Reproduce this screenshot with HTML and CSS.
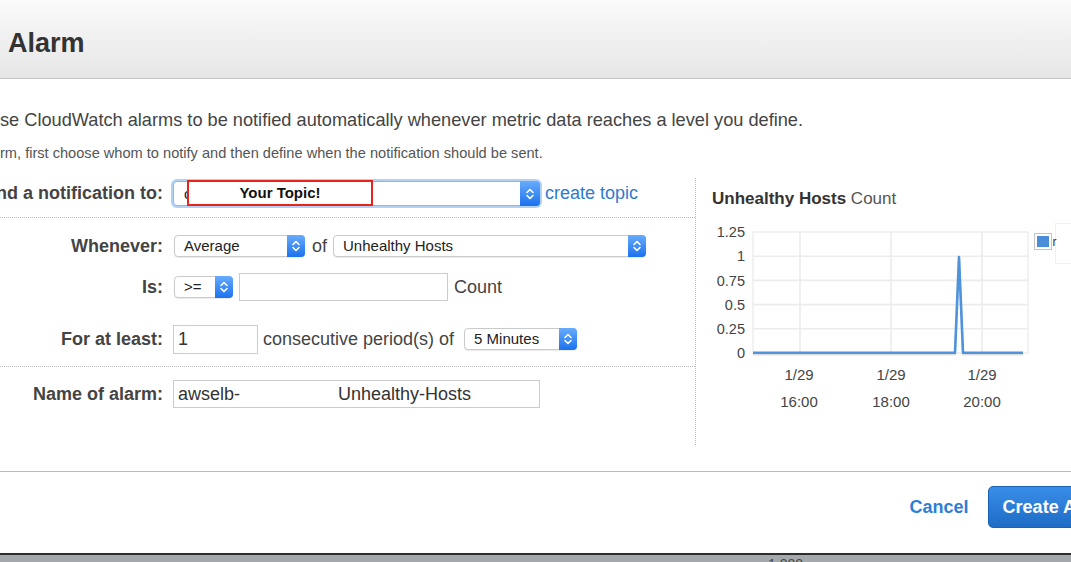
FILE: index.html
```html
<!DOCTYPE html>
<html>
<head>
<meta charset="utf-8">
<link rel="stylesheet" href="styles.css">
</head>
<body>
<div class="page">
  <header class="hdr"><h1>Alarm</h1></header>
  <p class="intro">se CloudWatch alarms to be notified automatically whenever metric data reaches a level you define.</p>
  <p class="sub">rm, first choose whom to notify and then define when the notification should be sent.</p>

  <div class="form">
    <div class="left">
      <div class="row r1">
        <div class="lbl"><span>nd a notification to:</span></div>
        <div class="sel sel-topic">
          <span class="txt">c</span>
          <span class="arr"><svg width="12" height="16" viewBox="0 0 12 16"><path d="M3 6.5 L6 3.5 L9 6.5 M3 9.5 L6 12.5 L9 9.5" fill="none" stroke="#fff" stroke-width="1.6" stroke-linecap="round" stroke-linejoin="round"/></svg></span>
          <div class="redbox">Your Topic!</div>
        </div>
        <a class="link">create topic</a>
      </div>

      <div class="group">
        <div class="row r2">
          <div class="lbl"><span>Whenever:</span></div>
          <div class="sel sel-avg">
            <span class="txt">Average</span>
            <span class="arr"><svg width="12" height="16" viewBox="0 0 12 16"><path d="M3 6.5 L6 3.5 L9 6.5 M3 9.5 L6 12.5 L9 9.5" fill="none" stroke="#fff" stroke-width="1.6" stroke-linecap="round" stroke-linejoin="round"/></svg></span>
          </div>
          <span class="word of">of</span>
          <div class="sel sel-metric">
            <span class="txt">Unhealthy Hosts</span>
            <span class="arr"><svg width="12" height="16" viewBox="0 0 12 16"><path d="M3 6.5 L6 3.5 L9 6.5 M3 9.5 L6 12.5 L9 9.5" fill="none" stroke="#fff" stroke-width="1.6" stroke-linecap="round" stroke-linejoin="round"/></svg></span>
          </div>
        </div>

        <div class="row r3">
          <div class="lbl"><span>Is:</span></div>
          <div class="sel sel-op">
            <span class="txt">&gt;=</span>
            <span class="arr"><svg width="12" height="16" viewBox="0 0 12 16"><path d="M3 6.5 L6 3.5 L9 6.5 M3 9.5 L6 12.5 L9 9.5" fill="none" stroke="#fff" stroke-width="1.6" stroke-linecap="round" stroke-linejoin="round"/></svg></span>
          </div>
          <div class="inp inp-thr"></div>
          <span class="word unit">Count</span>
        </div>

        <div class="row r4">
          <div class="lbl"><span>For at least:</span></div>
          <div class="inp inp-n">1</div>
          <span class="word cons">consecutive period(s) of</span>
          <div class="sel sel-period">
            <span class="txt">5 Minutes</span>
            <span class="arr"><svg width="12" height="16" viewBox="0 0 12 16"><path d="M3 6.5 L6 3.5 L9 6.5 M3 9.5 L6 12.5 L9 9.5" fill="none" stroke="#fff" stroke-width="1.6" stroke-linecap="round" stroke-linejoin="round"/></svg></span>
          </div>
        </div>
      </div>

      <div class="row r5">
        <div class="lbl"><span>Name of alarm:</span></div>
        <div class="inp inp-name"><span>awselb-</span><span class="gap"></span><span>Unhealthy-Hosts</span></div>
      </div>
    </div>

    <div class="chart">
      <div class="ctitle"><b>Unhealthy Hosts</b> Count</div>
      <svg class="plot" width="359" height="200" viewBox="0 0 359 200">
        <rect x="41" y="17" width="275" height="121" fill="#fff" stroke="#e6e6e6" stroke-width="1"/>
        <g stroke="#ececec" stroke-width="1.6">
          <line x1="41" y1="41.2" x2="316" y2="41.2"/>
          <line x1="41" y1="65.4" x2="316" y2="65.4"/>
          <line x1="41" y1="89.6" x2="316" y2="89.6"/>
          <line x1="41" y1="113.8" x2="316" y2="113.8"/>
          <line x1="88" y1="17" x2="88" y2="138"/>
          <line x1="179" y1="17" x2="179" y2="138"/>
          <line x1="270" y1="17" x2="270" y2="138"/>
        </g>
        <g class="ylab" text-anchor="end">
          <text x="33" y="22">1.25</text>
          <text x="33" y="46">1</text>
          <text x="33" y="70.5">0.75</text>
          <text x="33" y="94.5">0.5</text>
          <text x="33" y="119">0.25</text>
          <text x="33" y="143">0</text>
        </g>
        <g class="xlab" text-anchor="middle">
          <text x="87" y="165">1/29</text>
          <text x="179" y="165">1/29</text>
          <text x="270" y="165">1/29</text>
          <text x="87" y="192">16:00</text>
          <text x="179" y="192">18:00</text>
          <text x="270" y="192">20:00</text>
        </g>
        <polyline points="41,139.5 243,139.5 247,44 251,139.5 311,139.5" fill="none" stroke="rgba(0,0,0,0.13)" stroke-width="2"/>
        <polyline points="41,137.8 243,137.8 247,42 251,137.8 311,137.8" fill="none" stroke="#4f93dc" stroke-width="2.6" stroke-linejoin="round"/>
        <rect x="343.5" y="8.5" width="40" height="40" fill="none" stroke="#f0f0f0"/>
        <rect x="322.5" y="18.5" width="17" height="16" fill="#fff" stroke="#c4c4c4"/>
        <rect x="325" y="21" width="12" height="11" fill="#4a8ed9"/>
        <text x="340.5" y="31" class="legt">r</text>
      </svg>
    </div>
  </div>

  <div class="foot">
    <a class="cancel">Cancel</a>
    <button class="create">Create Alarm</button>
  </div>
  <div class="strip"><span class="s2">1,000</span></div>
</div>
</body>
</html>
```

FILE: styles.css
```css
html, body {
  margin: 0;
  padding: 0;
  overflow: hidden;
  background: #fff;
  font-family: "Liberation Sans", Arial, sans-serif;
}

.page {
  width: 1071px;
  height: 562px;
  display: flex;
  flex-direction: column;
  overflow: hidden;
}

.hdr {
  height: 79px;
  flex: none;
  box-sizing: border-box;
  border-bottom: 1px solid #c6c6c6;
  background: linear-gradient(#fafafa, #e6e6e6);
  padding: 27px 0 0 8px;
}

.hdr h1 {
  margin: 0;
  font-size: 27px;
  line-height: 32px;
  font-weight: bold;
  color: #333;
}

.intro {
  margin: 30px 0 0;
  font-size: 18.2px;
  line-height: 22px;
  color: #444;
  white-space: nowrap;
}

.sub {
  margin: 13px 0 0;
  font-size: 14.6px;
  line-height: 18px;
  color: #555;
  white-space: nowrap;
}

.form {
  margin-top: 16px;
  height: 267px;
  flex: none;
  display: flex;
}

.left {
  width: 696px;
  flex: none;
  box-sizing: border-box;
  border-right: 1px dotted #bcbcbc;
}

.row {
  display: flex;
  align-items: center;
  white-space: nowrap;
}

.lbl {
  width: 163px;
  flex: none;
  display: flex;
  justify-content: flex-end;
  margin-right: 10px;
  font-weight: bold;
  font-size: 18px;
  color: #444;
}

.r1 {
  height: 40px;
  box-sizing: border-box;
  padding-bottom: 8px;
  border-bottom: 1px dotted #bcbcbc;
}

.group {
  padding: 14px 0 13px;
  border-bottom: 1px dotted #bcbcbc;
}

.r2, .r3, .r4, .r5 { height: 28px; }
.r3 { margin-top: 13px; }
.r4 { margin-top: 24px; }
.r5 { margin-top: 13px; }

.word {
  font-size: 18px;
  color: #444;
}

.sel {
  position: relative;
  display: flex;
  align-items: stretch;
  height: 22px;
  box-sizing: border-box;
  border: 1px solid #cacaca;
  border-radius: 4px;
  background: #fff;
  box-shadow: 0 1px 1px rgba(0, 0, 0, 0.08);
  font-size: 15px;
  color: #222;
  flex: none;
}

.sel .txt {
  flex: 1;
  padding-left: 9px;
  line-height: 20px;
  overflow: hidden;
}

.sel .arr {
  width: 18px;
  margin: -1px -1px -1px 0;
  border-radius: 0 4px 4px 0;
  background: linear-gradient(#67abfb, #1c72ee);
  display: flex;
  align-items: center;
  justify-content: center;
}

.sel-topic {
  width: 367px;
  height: 25px;
  border-color: #8db8ee;
  box-shadow: 0 0 0 2px #b3d1f5;
}
.sel-topic .txt { line-height: 23px; padding-left: 10px; }
.sel-topic .arr { width: 20px; }

.redbox {
  position: absolute;
  left: 13px;
  top: -2px;
  width: 186px;
  height: 26px;
  box-sizing: border-box;
  border: 2px solid #e8231a;
  background: #fff;
  font-weight: bold;
  font-size: 15px;
  line-height: 22px;
  color: #111;
  text-align: center;
}

.link {
  margin-left: 5px;
  font-size: 18px;
  color: #2e7ad1;
}

.sel-avg { width: 131px; margin-left: 1px; }
.of { margin: 0 6px 0 7px; }
.sel-metric { width: 313px; }
.sel-op { width: 59px; margin-left: 1px; }
.sel-period { width: 113px; margin-left: 10px; }

.inp {
  height: 28px;
  box-sizing: border-box;
  border: 1px solid #cccccc;
  background: #fff;
  font-size: 18px;
  line-height: 26px;
  color: #333;
  padding-left: 4px;
  flex: none;
}

.inp-thr { width: 209px; margin-left: 6px; }
.unit { margin-left: 6px; }
.inp-n { width: 85px; height: 29px; }
.cons { margin-left: 5px; }
.inp-name { width: 367px; display: flex; }
.inp-name .gap { width: 98px; }

.chart {
  flex: 1;
  padding: 11px 0 0 16px;
  overflow: hidden;
}

.ctitle {
  font-size: 17px;
  line-height: 20px;
  color: #555;
  white-space: nowrap;
}
.ctitle b { color: #333; }

.plot {
  display: block;
  margin-top: 6px;
  font-family: "Liberation Sans", Arial, sans-serif;
}

.ylab text { font-size: 14.5px; fill: #444; }
.xlab text { font-size: 15px; fill: #444; }
.legt { font-size: 12px; fill: #333; }

.foot {
  margin-top: 26px;
  margin-right: -80px;
  height: 82px;
  flex: none;
  box-sizing: border-box;
  border-top: 1px solid #b9b9b9;
  padding: 0 22px 11px 0;
  display: flex;
  align-items: center;
  justify-content: flex-end;
  gap: 19px;
}

.cancel {
  font-weight: bold;
  font-size: 18px;
  color: #2d7ed6;
}

.create {
  height: 42px;
  padding: 0 14px;
  border: 1px solid #1a62b5;
  border-radius: 5px;
  background: linear-gradient(#3a8ee8, #1d6cc6);
  color: #fff;
  font-family: "Liberation Sans", Arial, sans-serif;
  font-weight: bold;
  font-size: 18px;
  white-space: nowrap;
}

.strip {
  height: 7px;
  flex: none;
  border-top: 2px solid #2c2c2c;
  background: #a4a8ab;
  overflow: hidden;
  display: flex;
  font-size: 14px;
  line-height: 16px;
  color: #4a4a4a;
}
.s2 { margin-left: 768px; margin-top: 1px; }
```
